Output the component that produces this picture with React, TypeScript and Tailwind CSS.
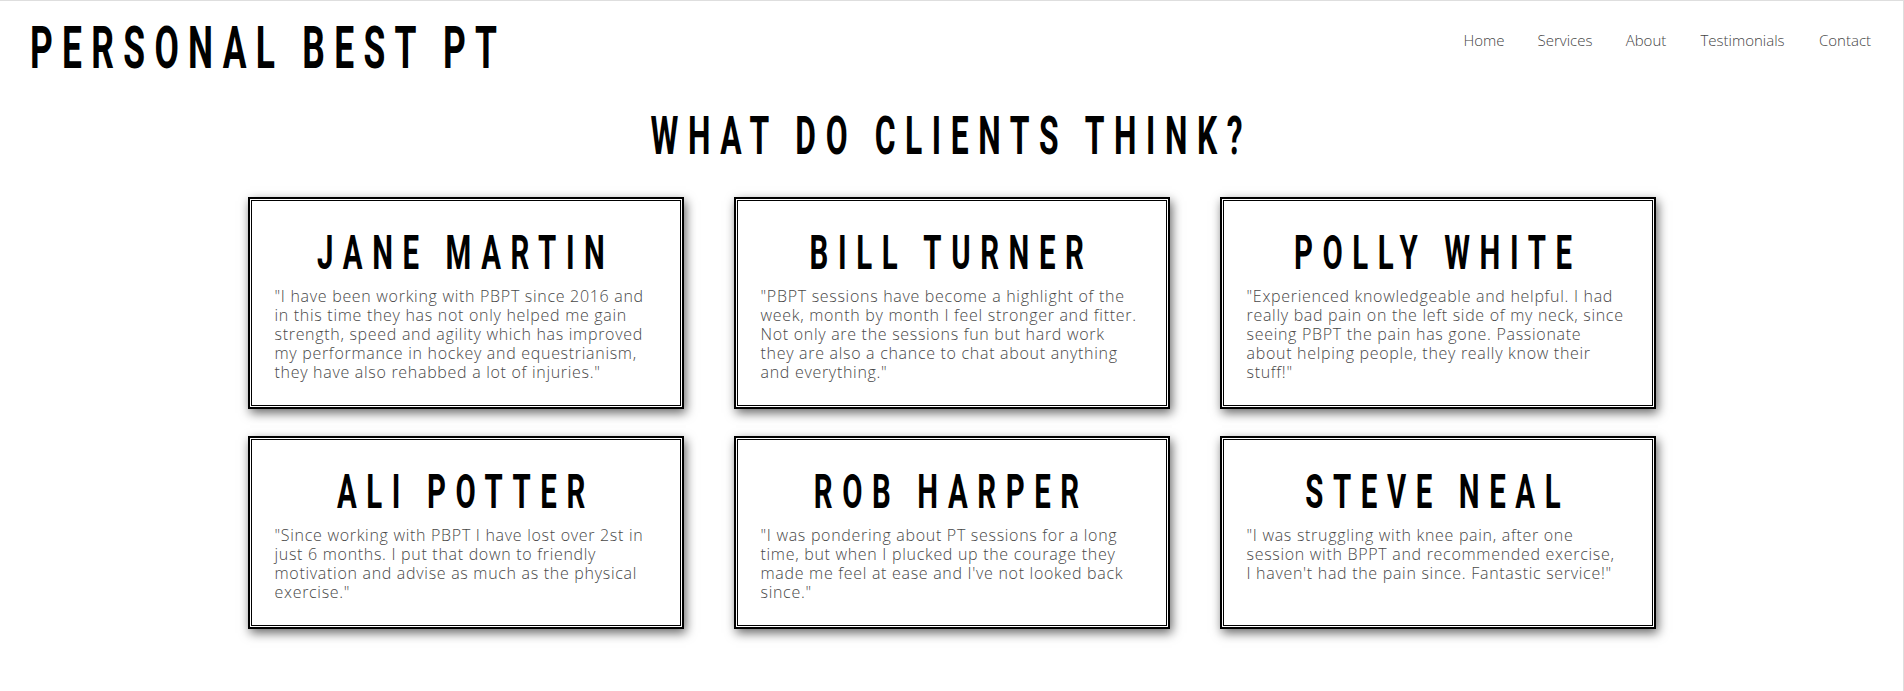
import React from "react";

const cards: { name: string; lines: string[] }[] = [
  {
    name: "JANE MARTIN",
    lines: [
      "\"I have been working with PBPT since 2016 and",
      "in this time they has not only helped me gain",
      "strength, speed and agility which has improved",
      "my performance in hockey and equestrianism,",
      "they have also rehabbed a lot of injuries.\"",
    ],
  },
  {
    name: "BILL TURNER",
    lines: [
      "\"PBPT sessions have become a highlight of the",
      "week, month by month I feel stronger and fitter.",
      "Not only are the sessions fun but hard work",
      "they are also a chance to chat about anything",
      "and everything.\"",
    ],
  },
  {
    name: "POLLY WHITE",
    lines: [
      "\"Experienced knowledgeable and helpful. I had",
      "really bad pain on the left side of my neck, since",
      "seeing PBPT the pain has gone. Passionate",
      "about helping people, they really know their",
      "stuff!\"",
    ],
  },
  {
    name: "ALI POTTER",
    lines: [
      "\"Since working with PBPT I have lost over 2st in",
      "just 6 months. I put that down to friendly",
      "motivation and advise as much as the physical",
      "exercise.\"",
    ],
  },
  {
    name: "ROB HARPER",
    lines: [
      "\"I was pondering about PT sessions for a long",
      "time, but when I plucked up the courage they",
      "made me feel at ease and I've not looked back",
      "since.\"",
    ],
  },
  {
    name: "STEVE NEAL",
    lines: [
      "\"I was struggling with knee pain, after one",
      "session with BPPT and recommended exercise,",
      "I haven't had the pain since. Fantastic service!\"",
    ],
  },
];

const navItems: { label: string; w: string }[] = [
  { label: "Home", w: "w-[44px]" },
  { label: "Services", w: "w-[58px]" },
  { label: "About", w: "w-[44px]" },
  { label: "Testimonials", w: "w-[89px]" },
  { label: "Contact", w: "w-[56px]" },
];

function Card({ name, lines }: { name: string; lines: string[] }) {
  return (
    <div className="border-2 border-black bg-white p-[1px] shadow-[2px_4px_10px_rgba(0,0,0,0.6)]">
      <div className="h-full border border-black bg-white px-[23px] pt-[28px] pb-[23px]">
        <div className="flex justify-center">
          <span className="inline-block shrink-0 scale-x-[0.6] whitespace-nowrap font-['Roboto',sans-serif] text-[49px] font-bold leading-[48px] tracking-[16px] text-black">
            {name}
          </span>
        </div>
        <div className="mt-[10px] font-['Open_Sans',sans-serif] text-[16px] font-light leading-[19px] tracking-[0.7px] text-[#484848]">
          {lines.map((l, i) => (
            <div key={i} className="whitespace-nowrap">
              {l}
            </div>
          ))}
        </div>
      </div>
    </div>
  );
}

export default function App() {
  return (
    <div className="h-[691px] w-full overflow-hidden border-t border-r border-[#dedede] bg-white">
      <header className="flex items-start justify-between">
        <div className="pt-[17px] pl-[30px]">
          <span className="inline-block origin-left scale-x-[0.6] whitespace-nowrap font-['Roboto',sans-serif] text-[59px] font-bold leading-[60px] tracking-[15.5px] text-black">
            PERSONAL BEST PT
          </span>
        </div>
        <nav className="flex gap-[30px] pt-[29px] pr-[30px]">
          {navItems.map((n) => (
            <a
              key={n.label}
              className={`${n.w} whitespace-nowrap text-center font-['Open_Sans',sans-serif] text-[15px] font-light leading-[20px] text-[#444]`}
            >
              {n.label}
            </a>
          ))}
        </nav>
      </header>

      <div className="mt-[31px] flex justify-center">
        <h2 className="inline-block shrink-0 scale-x-[0.6] whitespace-nowrap font-['Roboto',sans-serif] text-[53px] font-bold leading-[54px] tracking-[16px] text-black">
          WHAT DO CLIENTS THINK?
        </h2>
      </div>

      <div className="mt-[34px] grid grid-cols-[436px_436px_436px] justify-center gap-x-[50px] gap-y-[27px]">
        {cards.map((c) => (
          <Card key={c.name} name={c.name} lines={c.lines} />
        ))}
      </div>
    </div>
  );
}
